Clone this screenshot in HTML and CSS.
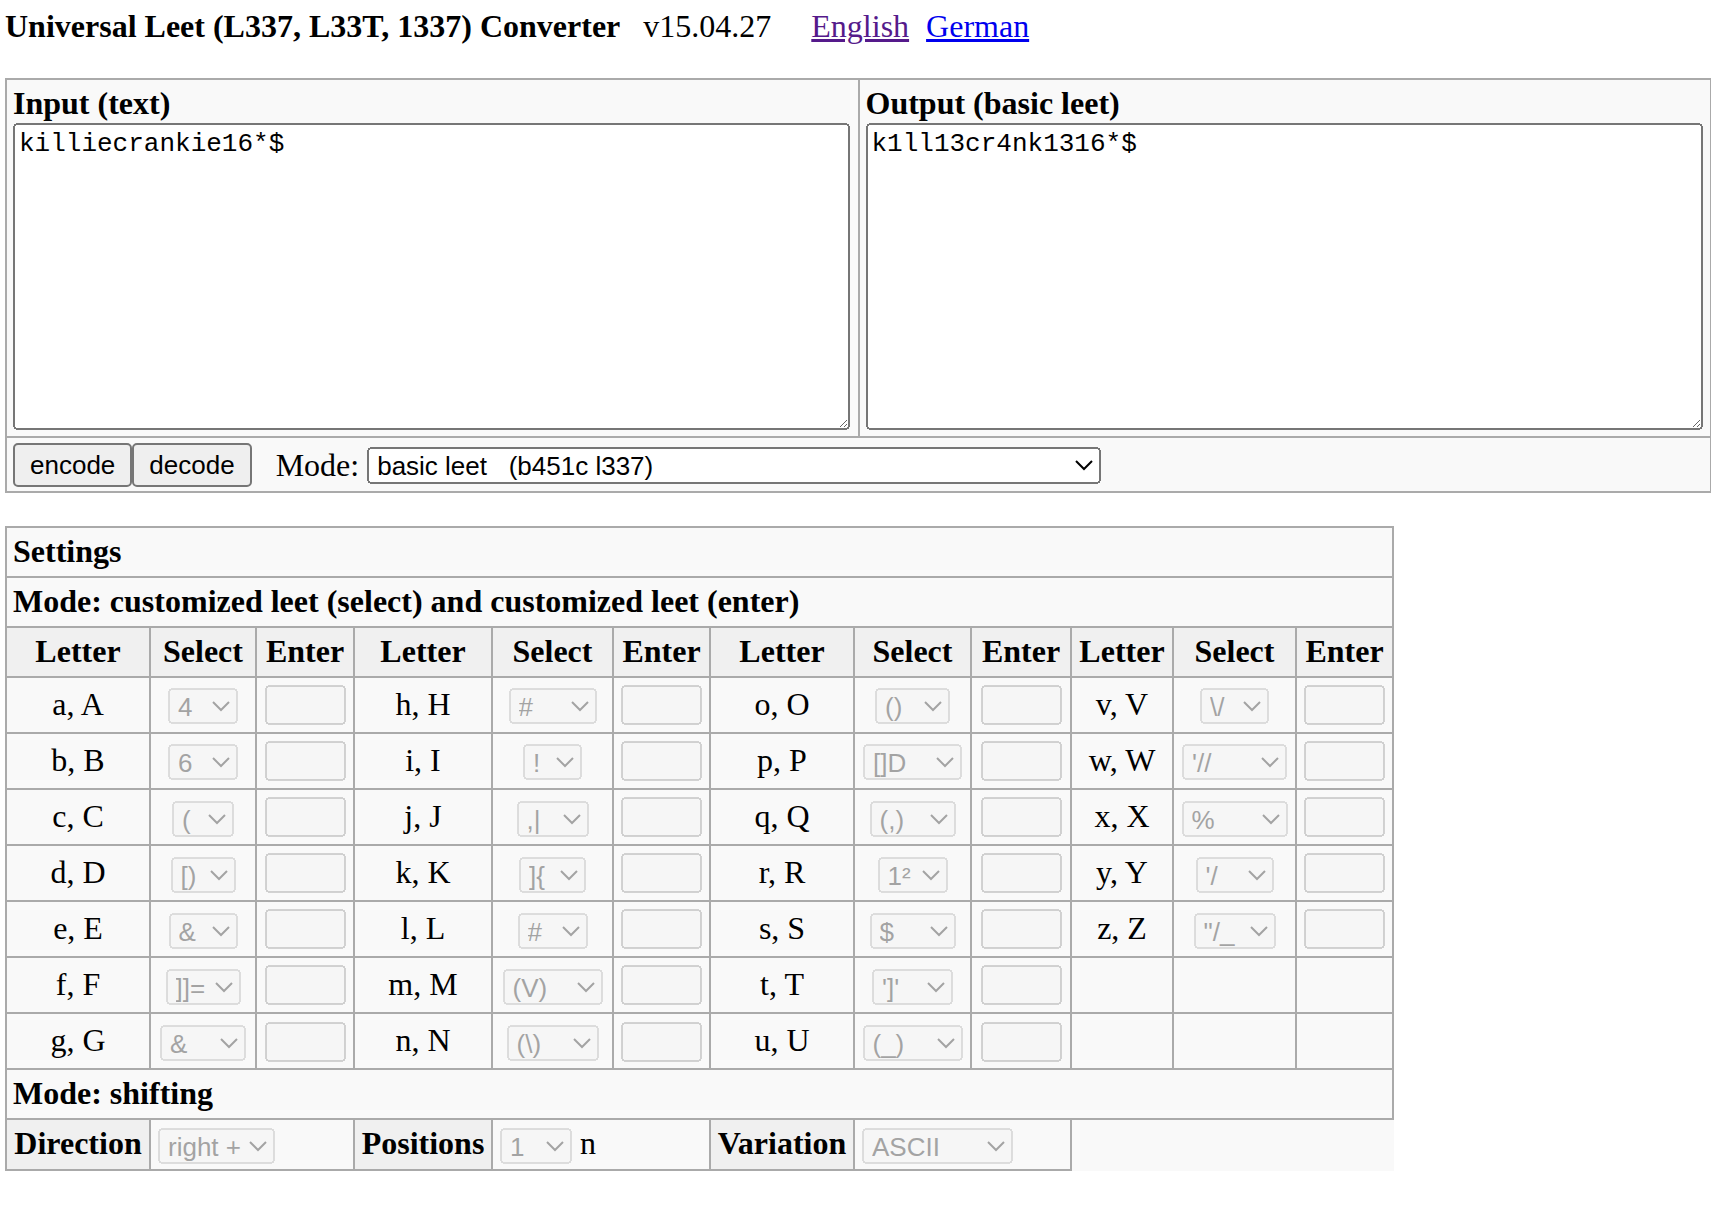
FILE: index.html
```html
<!DOCTYPE html>
<html lang="en">
<head>
<meta charset="utf-8">
<title>Universal Leet (L337, L33T, 1337) Converter</title>
<link rel="stylesheet" href="styles.css">
</head>
<body>
<div class="top">
  <b class="title">Universal Leet (L337, L33T, 1337) Converter</b>
  <span class="version">v15.04.27</span>
  <a class="lang lang-visited" href="#">English</a>
  <a class="lang" href="#">German</a>
</div>

<table class="io">
  <colgroup><col class="io-col"><col class="io-col"></colgroup>
  <tr>
    <td class="io-cell"><b class="io-head">Input (text)</b><textarea class="io-text">killiecrankie16*$</textarea></td>
    <td class="io-cell"><b class="io-head">Output (basic leet)</b><textarea class="io-text">k1ll13cr4nk1316*$</textarea></td>
  </tr>
  <tr>
    <td colspan="2" class="controls-cell">
      <div class="controls">
        <button type="button">encode</button><button type="button">decode</button>
        <span class="mode-label">Mode:</span>
        <select class="mode-select"><option>basic leet&nbsp;&nbsp;&nbsp;(b451c l337)</option></select>
      </div>
    </td>
  </tr>
</table>

<table class="settings">
  <colgroup>
    <col class="c1"><col class="c2"><col class="c3">
    <col class="c4"><col class="c5"><col class="c6">
    <col class="c7"><col class="c8"><col class="c9">
    <col class="c10"><col class="c11"><col class="c12">
  </colgroup>
  <tr><th colspan="12" class="section">Settings</th></tr>
  <tr><th colspan="12" class="section">Mode: customized leet (select) and customized leet (enter)</th></tr>
  <tr class="head">
    <th>Letter</th><th>Select</th><th>Enter</th>
    <th>Letter</th><th>Select</th><th>Enter</th>
    <th>Letter</th><th>Select</th><th>Enter</th>
    <th>Letter</th><th>Select</th><th>Enter</th>
  </tr>
  <tr>
    <td>a, A</td><td><select class="pick w35" disabled><option>4</option></select></td><td><input class="entry" type="text" disabled></td>
    <td>h, H</td><td><select class="pick w44" disabled><option>#</option></select></td><td><input class="entry" type="text" disabled></td>
    <td>o, O</td><td><select class="pick w37" disabled><option>()</option></select></td><td><input class="entry" type="text" disabled></td>
    <td>v, V</td><td><select class="pick w34" disabled><option>\/</option></select></td><td><input class="entry" type="text" disabled></td>
  </tr>
  <tr>
    <td>b, B</td><td><select class="pick w35" disabled><option>6</option></select></td><td><input class="entry" type="text" disabled></td>
    <td>i, I</td><td><select class="pick w29" disabled><option>!</option></select></td><td><input class="entry" type="text" disabled></td>
    <td>p, P</td><td><select class="pick w49" disabled><option>[]D</option></select></td><td><input class="entry" type="text" disabled></td>
    <td>w, W</td><td><select class="pick w52" disabled><option>'//</option></select></td><td><input class="entry" type="text" disabled></td>
  </tr>
  <tr>
    <td>c, C</td><td><select class="pick w31" disabled><option>(</option></select></td><td><input class="entry" type="text" disabled></td>
    <td>j, J</td><td><select class="pick w36" disabled><option>,|</option></select></td><td><input class="entry" type="text" disabled></td>
    <td>q, Q</td><td><select class="pick w43" disabled><option>(,)</option></select></td><td><input class="entry" type="text" disabled></td>
    <td>x, X</td><td><select class="pick w53" disabled><option>%</option></select></td><td><input class="entry" type="text" disabled></td>
  </tr>
  <tr>
    <td>d, D</td><td><select class="pick w32" disabled><option>[)</option></select></td><td><input class="entry" type="text" disabled></td>
    <td>k, K</td><td><select class="pick w33" disabled><option>]{</option></select></td><td><input class="entry" type="text" disabled></td>
    <td>r, R</td><td><select class="pick w35" disabled><option>1²</option></select></td><td><input class="entry" type="text" disabled></td>
    <td>y, Y</td><td><select class="pick w39" disabled><option>'/</option></select></td><td><input class="entry" type="text" disabled></td>
  </tr>
  <tr>
    <td>e, E</td><td><select class="pick w34" disabled><option>&amp;</option></select></td><td><input class="entry" type="text" disabled></td>
    <td>l, L</td><td><select class="pick w35" disabled><option>#</option></select></td><td><input class="entry" type="text" disabled></td>
    <td>s, S</td><td><select class="pick w43" disabled><option>$</option></select></td><td><input class="entry" type="text" disabled></td>
    <td>z, Z</td><td><select class="pick w41" disabled><option>"/_</option></select></td><td><input class="entry" type="text" disabled></td>
  </tr>
  <tr>
    <td>f, F</td><td><select class="pick w37" disabled><option>]]=</option></select></td><td><input class="entry" type="text" disabled></td>
    <td>m, M</td><td><select class="pick w50" disabled><option>(V)</option></select></td><td><input class="entry" type="text" disabled></td>
    <td>t, T</td><td><select class="pick w40" disabled><option>']'</option></select></td><td><input class="entry" type="text" disabled></td>
    <td></td><td></td><td></td>
  </tr>
  <tr>
    <td>g, G</td><td><select class="pick w43" disabled><option>&amp;</option></select></td><td><input class="entry" type="text" disabled></td>
    <td>n, N</td><td><select class="pick w46" disabled><option>(\)</option></select></td><td><input class="entry" type="text" disabled></td>
    <td>u, U</td><td><select class="pick w50" disabled><option>(_)</option></select></td><td><input class="entry" type="text" disabled></td>
    <td></td><td></td><td></td>
  </tr>
  <tr><th colspan="12" class="section">Mode: shifting</th></tr>
  <tr>
    <th>Direction</th>
    <td colspan="2" class="opt"><select class="pick w58" disabled><option>right +</option></select></td>
    <th>Positions</th>
    <td colspan="2" class="opt"><select class="pick w36" disabled><option>1</option></select> n</td>
    <th>Variation</th>
    <td colspan="2" class="opt"><select class="pick w75" disabled><option>ASCII</option></select></td>
  </tr>
</table>
</body>
</html>
```

FILE: styles.css
```css
body {
  zoom: 2;
  margin: 4px 2.5px;
  background: #ffffff;
  color: #000000;
  font-family: "Liberation Serif", "Times New Roman", serif;
  font-size: 16px;
}

.top {
  display: flex;
  align-items: baseline;
  white-space: nowrap;
  margin-bottom: 16.6px;
}

.version {
  margin-left: 11.5px;
}

.lang {
  margin-left: 8.5px;
  color: #0000ee;
  text-decoration: underline;
}

.lang-visited {
  margin-left: 20px;
  color: #551a8b;
}

table {
  border-collapse: collapse;
  background: #f9f9f9;
}

td,
th {
  border: 1px solid #aaaaaa;
}

/* input / output table */
.io {
  width: 853.5px;
  table-layout: fixed;
}

.io-cell {
  padding: 2.5px 3px 1px;
  vertical-align: top;
  text-align: left;
}

.io-head {
  display: block;
}

.io-text {
  display: block;
  box-sizing: border-box;
  width: 418.5px;
  height: 153.5px;
  margin: 0.5px 0 2px;
  font-family: "Liberation Mono", "Courier New", monospace;
  font-size: 13px;
}

.controls-cell {
  padding: 2.5px 3px 2px;
}

.controls {
  display: flex;
  align-items: center;
  height: 22px;
}

button {
  font-family: "Liberation Sans", Arial, sans-serif;
  font-size: 13px;
  height: 22px;
  padding: 1px 6.5px;
  margin: 0;
}

.mode-label {
  margin-left: 12px;
  margin-right: 4px;
}

.mode-select {
  width: 367px;
  height: 18.5px;
  font-family: "Liberation Sans", Arial, sans-serif;
  font-size: 13px;
}

/* settings table */
.settings {
  margin-top: 16.5px;
  width: 693.5px;
  table-layout: fixed;
}

.settings td,
.settings th {
  padding: 3px;
  text-align: center;
  vertical-align: middle;
  white-space: nowrap;
}

.settings th {
  background: #f0f0f0;
  line-height: 17.9px;
}

.settings th.section {
  background: transparent;
  text-align: left;
}

.settings td.opt {
  text-align: left;
  padding: 2.4px 3px 2.4px 3.5px;
}

.c1 { width: 72px; }
.c2 { width: 53px; }
.c3 { width: 49px; }
.c4 { width: 69px; }
.c5 { width: 60.5px; }
.c6 { width: 48.5px; }
.c7 { width: 72px; }
.c8 { width: 58.5px; }
.c9 { width: 50px; }
.c10 { width: 51px; }
.c11 { width: 61.5px; }
.c12 { width: 48.5px; }

.pick {
  height: 18px;
  font-family: "Liberation Sans", Arial, sans-serif;
  font-size: 13px;
  vertical-align: middle;
}

.entry {
  box-sizing: border-box;
  width: 40.5px;
  height: 20px;
  margin: 0.2px 0;
  vertical-align: middle;
}

.w29 { width: 29.5px; }
.w31 { width: 31px; }
.w32 { width: 32.5px; }
.w33 { width: 33.5px; }
.w34 { width: 34.5px; }
.w35 { width: 35px; }
.w36 { width: 36px; }
.w37 { width: 37.5px; }
.w39 { width: 39px; }
.w40 { width: 40.5px; }
.w41 { width: 41px; }
.w43 { width: 43px; }
.w44 { width: 44px; }
.w46 { width: 46px; }
.w49 { width: 49.5px; }
.w50 { width: 50px; }
.w52 { width: 52.5px; }
.w53 { width: 53px; }
.w58 { width: 58.5px; }
.w75 { width: 75.5px; }
```
